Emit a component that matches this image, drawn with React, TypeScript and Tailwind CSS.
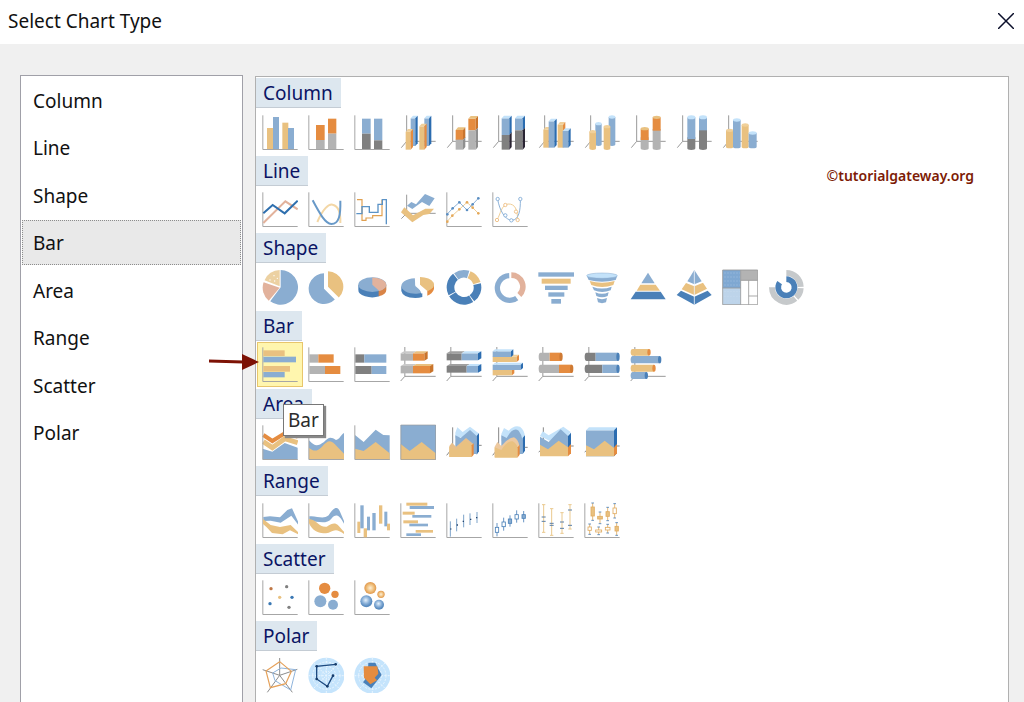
import { useState } from "react";
import type { ReactNode } from "react";
import { clsx } from "clsx";

const BLUE = "#8aadd1";
const DEEP = "#4a80b8";
const SKY = "#c3e2fa";
const TAN = "#e9c180";
const ORANGE = "#e58c40";
const SALMON = "#e2b29c";
const GRAY = "#b3b3b3";
const DARK = "#808080";

type Shades = [front: string, top: string, side: string];

const blue3: Shades = [BLUE, SKY, "#2b6cb0"];
const tan3: Shades = [TAN, "#f0d09a", ORANGE];
const orange3: Shades = [ORANGE, TAN, "#c9742c"];
const gray3: Shades = [GRAY, "#c9c9c9", "#8f8f8f"];
const dark3: Shades = [DARK, "#a0a0a0", "#2a2433"];

/* ---- drawing helpers, all on a 108 x 108 grid ---- */

const Axis = () => (
  <path d="M2.5 4V106.5H107" fill="none" stroke="#a6a6a6" strokeWidth="3" />
);

const Axis3 = () => (
  <path d="M20 4V82H107M20 82L4 101" fill="none" stroke="#999" strokeWidth="3" />
);

const BarAxis3 = () => (
  <path d="M14.5 3V91H107M14.5 91L2 105" fill="none" stroke="#999" strokeWidth="3" />
);

function R({ x, y, x2, y2, c }: { x: number; y: number; x2: number; y2: number; c: string }) {
  return <rect x={x} y={y} width={x2 - x} height={y2 - y} fill={c} />;
}

function P({ p, c }: { p: string; c: string }) {
  return <polygon points={p} fill={c} />;
}

function L({ p, c, w = 3 }: { p: string; c: string; w?: number }) {
  return <polyline points={p} fill="none" stroke={c} strokeWidth={w} />;
}

type BoxProps = {
  x: number;
  y: number;
  x2: number;
  y2: number;
  s: Shades;
  dx?: number;
  dy?: number;
  top?: boolean;
  side?: boolean;
};

function Box({ x, y, x2, y2, s, dx = 7, dy = 8, top = true, side = true }: BoxProps) {
  return (
    <g>
      <R x={x} y={y} x2={x2} y2={y2} c={s[0]} />
      {top && <P p={`${x},${y} ${x + dx},${y - dy} ${x2 + dx},${y - dy} ${x2},${y}`} c={s[1]} />}
      {side && (
        <P p={`${x2},${y} ${x2 + dx},${y - dy} ${x2 + dx},${y2 - dy} ${x2},${y2}`} c={s[2]} />
      )}
    </g>
  );
}

function Cyl({ x, y, x2, y2, s, top = true }: Omit<BoxProps, "dx" | "dy" | "side">) {
  const r = (x2 - x) / 2;
  return (
    <g>
      <path d={`M${x} ${y}V${y2 - 5}A${r} 5 0 0 0 ${x2} ${y2 - 5}V${y}Z`} fill={s[0]} />
      {top && <ellipse cx={x + r} cy={y} rx={r} ry="5" fill={s[1]} />}
    </g>
  );
}

// Lying cylinder: the first part runs to `mid`, the second to x2
function Tube(p: { x: number; y: number; mid?: number; x2: number; y2: number; a: string; b: string; cap: string }) {
  const r = (p.y2 - p.y) / 2;
  const mid = p.mid ?? p.x2 - 6;
  return (
    <g>
      <path d={`M${p.x + 6} ${p.y}H${mid}V${p.y2}H${p.x + 6}A6 ${r} 0 0 1 ${p.x + 6} ${p.y}Z`} fill={p.a} />
      <R x={mid} y={p.y} x2={p.x2 - 5} y2={p.y2} c={p.b} />
      <ellipse cx={p.x2 - 5} cy={p.y + r} rx="5" ry={r} fill={p.cap} />
    </g>
  );
}

type SliceProps = { cx: number; cy: number; r: number; from: number; to: number; hole?: number; flat?: number; c: string };

function Slice({ cx, cy, r, from, to, hole = 0, flat = 1, c }: SliceProps) {
  const at = (deg: number, rad: number) => {
    const a = (deg * Math.PI) / 180;
    return `${(cx + rad * Math.sin(a)).toFixed(1)} ${(cy - rad * flat * Math.cos(a)).toFixed(1)}`;
  };
  const big = to - from > 180 ? 1 : 0;
  const inner = hole
    ? `L${at(to, hole)}A${hole} ${hole * flat} 0 ${big} 0 ${at(from, hole)}Z`
    : `L${cx} ${cy}Z`;
  return <path d={`M${at(from, r)}A${r} ${r * flat} 0 ${big} 1 ${at(to, r)}${inner}`} fill={c} />;
}

function Dots({ at, c, r = 4, hollow }: { at: number[][]; c: string; r?: number; hollow?: boolean }) {
  return (
    <g fill={hollow ? "#fff" : c} stroke={c} strokeWidth={hollow ? 2.5 : 0}>
      {at.map(([x, y]) => (
        <circle key={`${x}-${y}`} cx={x} cy={y} r={r} />
      ))}
    </g>
  );
}

// Box and whisker
function Candle(p: { x: number; y: number; y2: number; b: number; b2: number; c: string; fill?: string; tick?: boolean; w?: number }) {
  const w = p.w ?? 5;
  return (
    <g stroke={p.c} strokeWidth="2.5" fill={p.fill ?? "#fff"}>
      <path d={`M${p.x} ${p.y}V${p.y2}`} />
      {p.tick && <path d={`M${p.x - 4} ${p.y}h8M${p.x - 4} ${p.y2}h8`} stroke={DEEP} />}
      <rect x={p.x - w} y={p.b} width={w * 2} height={p.b2 - p.b} />
    </g>
  );
}

function PolarGrid() {
  return (
    <g>
      <circle cx="55" cy="56" r="54" fill="#c5e4fc" />
      <g fill="none" stroke="#e9f5fe" strokeWidth="3" strokeDasharray="6 4">
        <circle cx="55" cy="56" r="41" />
        <circle cx="55" cy="56" r="28" />
        <circle cx="55" cy="56" r="14" />
        <path d="M55 2V110M1 56H109M17 18L93 94M93 18L17 94" />
      </g>
    </g>
  );
}

function Ball({ x, y, r, id }: { x: number; y: number; r: number; id: string }) {
  return <circle cx={x} cy={y} r={r} fill={`url(#${id})`} />;
}

/* ---- the chart types ---- */

type ChartType = { name: string; art: ReactNode };
type Group = { title: string; charts: ChartType[] };

const groups: Group[] = [
  {
    title: "Column",
    charts: [
      {
        name: "Column",
        art: (
          <>
            <Axis />
            <R x={15} y={42} x2={33} y2={105} c={TAN} />
            <R x={33} y={9} x2={51} y2={105} c={BLUE} />
            <R x={61} y={26} x2={79} y2={105} c={TAN} />
            <R x={78} y={42} x2={96} y2={105} c={BLUE} />
          </>
        ),
      },
      {
        name: "Stacked Column",
        art: (
          <>
            <Axis />
            <R x={24} y={33} x2={50} y2={78} c={ORANGE} />
            <R x={24} y={78} x2={50} y2={105} c={GRAY} />
            <R x={60} y={14} x2={85} y2={59} c={ORANGE} />
            <R x={60} y={59} x2={85} y2={105} c={GRAY} />
          </>
        ),
      },
      {
        name: "100% Stacked Column",
        art: (
          <>
            <Axis />
            <R x={24} y={14} x2={50} y2={59} c={BLUE} />
            <R x={24} y={59} x2={50} y2={105} c={DARK} />
            <R x={60} y={14} x2={85} y2={79} c={BLUE} />
            <R x={60} y={79} x2={85} y2={105} c={DARK} />
          </>
        ),
      },
      {
        name: "3-D Column",
        art: (
          <>
            <Axis3 />
            <Box x={32} y={13} x2={46} y2={96} s={blue3} />
            <Box x={73} y={13} x2={87} y2={96} s={blue3} />
            <Box x={17} y={53} x2={32} y2={107} s={tan3} />
            <Box x={58} y={37} x2={73} y2={107} s={tan3} />
          </>
        ),
      },
      {
        name: "3-D Stacked Column",
        art: (
          <>
            <Axis3 />
            <Box x={29} y={48} x2={51} y2={78} s={orange3} />
            <Box x={29} y={77} x2={51} y2={107} s={gray3} top={false} />
            <Box x={67} y={14} x2={89} y2={49} s={orange3} />
            <Box x={67} y={49} x2={89} y2={107} s={gray3} top={false} />
          </>
        ),
      },
      {
        name: "3-D 100% Stacked Column",
        art: (
          <>
            <Axis3 />
            <Box x={29} y={13} x2={52} y2={63} s={blue3} />
            <Box x={29} y={63} x2={52} y2={107} s={dark3} top={false} />
            <Box x={69} y={13} x2={92} y2={49} s={blue3} />
            <Box x={69} y={49} x2={92} y2={107} s={dark3} top={false} />
          </>
        ),
      },
      {
        name: "3-D Clustered Column",
        art: (
          <>
            <Axis3 />
            <Box x={16} y={47} x2={32} y2={101} s={tan3} />
            <Box x={32} y={22} x2={49} y2={101} s={blue3} />
            <Box x={59} y={32} x2={75} y2={101} s={tan3} />
            <Box x={74} y={51} x2={91} y2={101} s={blue3} />
          </>
        ),
      },
      {
        name: "3-D Cylinder",
        art: (
          <>
            <Axis3 />
            <Cyl x={34} y={29} x2={53} y2={96} s={blue3} />
            <Cyl x={74} y={9} x2={94} y2={96} s={blue3} />
            <Cyl x={16} y={53} x2={36} y2={108} s={tan3} />
            <Cyl x={59} y={38} x2={79} y2={108} s={tan3} />
          </>
        ),
      },
      {
        name: "Stacked Cylinder",
        art: (
          <>
            <Axis3 />
            <Cyl x={32} y={70} x2={56} y2={108} s={gray3} top={false} />
            <R x={32} y={44} x2={56} y2={78} c={ORANGE} />
            <ellipse cx="44" cy="44" rx="12" ry="5" fill={TAN} />
            <Cyl x={68} y={45} x2={92} y2={108} s={gray3} top={false} />
            <R x={68} y={10} x2={92} y2={50} c={ORANGE} />
            <ellipse cx="80" cy="10" rx="12" ry="5" fill={TAN} />
          </>
        ),
      },
      {
        name: "100% Stacked Cylinder",
        art: (
          <>
            <Axis3 />
            <Cyl x={34} y={70} x2={58} y2={108} s={dark3} top={false} />
            <R x={34} y={10} x2={58} y2={75} c={BLUE} />
            <ellipse cx="46" cy="10" rx="12" ry="6" fill={SKY} />
            <Cyl x={69} y={45} x2={93} y2={108} s={dark3} top={false} />
            <R x={69} y={10} x2={93} y2={49} c={BLUE} />
            <ellipse cx="81" cy="10" rx="12" ry="6" fill={SKY} />
          </>
        ),
      },
      {
        name: "Clustered Cylinder",
        art: (
          <>
            <Axis3 />
            <Cyl x={12} y={49} x2={34} y2={103} s={tan3} />
            <Cyl x={33} y={18} x2={56} y2={103} s={blue3} />
            <Cyl x={59} y={33} x2={80} y2={103} s={tan3} />
            <Cyl x={80} y={57} x2={104} y2={103} s={blue3} />
          </>
        ),
      },
    ],
  },
  {
    title: "Line",
    charts: [
      {
        name: "Line",
        art: (
          <>
            <Axis />
            <L p="4,96 70,31 107,55" c={SALMON} w={6} />
            <L p="4,67 32,42 68,67 107,29" c="#2f6fae" w={6} />
          </>
        ),
      },
      {
        name: "Smooth Line",
        art: (
          <>
            <Axis />
            <path d="M28 93C44 54 62 38 74 41C92 45 98 70 97 96" fill="none" stroke="#f3d7a6" strokeWidth="6" />
            <path d="M14 28C34 66 52 98 70 99C94 99 98 70 97 29" fill="none" stroke="#6899c8" strokeWidth="6" />
          </>
        ),
      },
      {
        name: "Stepped Line",
        art: (
          <>
            <Axis />
            <path d="M9 26H24V88H36V81H56V74H84V26" fill="none" stroke="#e0a050" strokeWidth="3.5" />
            <path d="M7 68H24V47H46V64H72V40H85V26H97V100" fill="none" stroke="#5b93c6" strokeWidth="4" />
          </>
        ),
      },
      {
        name: "3-D Line",
        art: (
          <>
            <path d="M20 11V67H107M20 67L4 83" fill="none" stroke="#999" strokeWidth="3" />
            <P p="21,44 34,33 48,40 75,9 104,22 88,45 66,33 37,54" c={BLUE} />
            <P p="3,64 13,49 39,73 76,53 102,53 88,69 70,72 37,94" c={TAN} />
          </>
        ),
      },
      {
        name: "Line with Markers",
        art: (
          <>
            <Axis />
            <L p="3,92 19,74 40,55 63,34 80,50 97,67" c="#f0cf98" />
            <L p="3,70 20,52 40,34 63,57 80,40 97,22" c="#8db2d8" />
            <Dots at={[[4, 92], [19, 74], [40, 55], [63, 34], [80, 50], [97, 67]]} c="#e5a95a" />
            <Dots at={[[4, 70], [20, 52], [40, 34], [63, 57], [80, 40], [97, 22]]} c="#5b8ec2" />
          </>
        ),
      },
      {
        name: "Smooth Line with Markers",
        art: (
          <>
            <Axis />
            <path d="M15 87C26 68 28 42 48 39C70 38 76 56 77 87" fill="none" stroke="#f0cf98" strokeWidth="3" />
            <path d="M17 24C22 58 40 88 60 88C80 86 86 60 85 24" fill="none" stroke="#8db2d8" strokeWidth="3" />
            <Dots at={[[15, 87], [40, 42], [72, 62], [77, 87]]} c="#ecb878" r={5} hollow />
            <Dots at={[[17, 24], [40, 73], [58, 88], [85, 24]]} c="#7ba7d4" r={5} hollow />
          </>
        ),
      },
    ],
  },
  {
    title: "Shape",
    charts: [
      {
        name: "Pie",
        art: (
          <>
            <Slice cx={56} cy={55} r={52} from={0} to={217} c={BLUE} />
            <Slice cx={53} cy={56} r={51} from={220} to={289} c={SALMON} />
            <Slice cx={53} cy={52} r={49} from={292} to={360} c="#ecd1a2" />
            <g fill="#fff">
              <circle cx="24" cy="33" r="2" />
              <circle cx="36" cy="20" r="2" />
              <circle cx="38" cy="36" r="2" />
              <circle cx="46" cy="28" r="2" />
            </g>
          </>
        ),
      },
      {
        name: "Exploded Pie",
        art: (
          <>
            <Slice cx={48} cy={59} r={46} from={135} to={360} c={BLUE} />
            <Slice cx={60} cy={53} r={46} from={0} to={135} c={TAN} />
          </>
        ),
      },
      {
        name: "3-D Pie",
        art: (
          <>
            <path d="M13 47V62A42 22 0 0 0 76 82V60Z" fill={DEEP} />
            <path d="M97 47V62A42 22 0 0 1 74 82V60Z" fill="#d98447" />
            <ellipse cx="55" cy="47" rx="42" ry="22" fill={BLUE} />
            <Slice cx={55} cy={47} r={42} flat={0.52} from={0} to={150} c={SALMON} />
          </>
        ),
      },
      {
        name: "3-D Exploded Pie",
        art: (
          <>
            <path d="M4 52V66Q8 86 46 87Q58 87 67 84V71Z" fill={DEEP} />
            <Slice cx={46} cy={51} r={42} flat={0.55} from={148} to={358} c={BLUE} />
            <path d="M102 46V60Q98 74 82 80V65Z" fill={ORANGE} />
            <Slice cx={60} cy={47} r={42} flat={0.55} from={0} to={147} c={TAN} />
            <path d="M50 27V46L57 49L68 73" fill="none" stroke="#fff" strokeWidth="7" />
          </>
        ),
      },
      {
        name: "Doughnut",
        art: (
          <>
            <Slice cx={54} cy={55} r={52} hole={29} from={325} to={378} c={BLUE} />
            <Slice cx={54} cy={55} r={52} hole={29} from={22} to={72} c={TAN} />
            <Slice cx={54} cy={55} r={52} hole={29} from={76} to={144} c={DEEP} />
            <Slice cx={54} cy={55} r={52} hole={29} from={148} to={239} c={DEEP} />
            <Slice cx={54} cy={55} r={52} hole={29} from={243} to={321} c={DEEP} />
          </>
        ),
      },
      {
        name: "Exploded Doughnut",
        art: (
          <>
            <Slice cx={53} cy={57} r={45} hole={29} from={145} to={358} c={BLUE} />
            <Slice cx={58} cy={53} r={43} hole={26} from={0} to={136} c={SALMON} />
          </>
        ),
      },
      {
        name: "Funnel",
        art: (
          <>
            <R x={1} y={10} x2={108} y2={23} c={BLUE} />
            <R x={11} y={29} x2={98} y2={44} c={TAN} />
            <R x={21} y={50} x2={89} y2={63} c={BLUE} />
            <R x={31} y={70} x2={79} y2={83} c={BLUE} />
            <R x={40} y={90} x2={69} y2={104} c={BLUE} />
          </>
        ),
      },
      {
        name: "3-D Funnel",
        art: (
          <>
            <path d="M8 20L14 33Q54 44 95 33L100 20Z" fill={BLUE} />
            <path d="M17 36Q54 47 92 36L88 48Q54 60 22 48Z" fill={TAN} />
            <path d="M25 53Q54 64 83 53L80 64Q54 74 30 64Z" fill={BLUE} />
            <path d="M34 70Q54 79 74 70L71 81Q54 89 37 81Z" fill={BLUE} />
            <path d="M39 87Q54 94 69 87L66 100Q54 105 42 100Z" fill={BLUE} />
            <ellipse cx="54" cy="20" rx="46" ry="8" fill={SKY} stroke={BLUE} strokeWidth="1.5" />
          </>
        ),
      },
      {
        name: "Pyramid",
        art: (
          <>
            <P p="54,11 34,43 74,43" c={BLUE} />
            <P p="31,47 77,47 90,65 20,65" c={TAN} />
            <P p="17,68 92,68 107,91 2,91" c={DEEP} />
          </>
        ),
      },
      {
        name: "3-D Pyramid",
        art: (
          <>
            <P p="55,3 34,37 55,46 77,37" c={BLUE} />
            <P p="30,42 55,52 81,41 93,59 55,78 17,61" c={TAN} />
            <P p="15,65 55,83 95,65 107,78 55,107 2,78" c={DEEP} />
            <path d="M55 4V107" stroke="#eef4fa" strokeWidth="2.5" />
          </>
        ),
      },
      {
        name: "Tree Map",
        art: (
          <>
            <R x={2} y={2} x2={108} y2={108} c="#fff" />
            <R x={2} y={3} x2={56} y2={57} c="#7fa8d2" />
            <R x={56} y={3} x2={107} y2={34} c={GRAY} />
            <R x={2} y={57} x2={56} y2={107} c="#bdd4ea" />
            <path
              d="M2 3H107V107H2ZM56 3V107M2 57H56M56 34H107M80 34V107M80 81H107"
              fill="none"
              stroke="#999"
              strokeWidth="2.5"
            />
            <path d="M8 12H54M8 24H54M8 36H54M8 48H54M8 68H54M8 82H54M8 96H54" stroke="#d6e6f5" strokeWidth="2" strokeDasharray="2 7" />
          </>
        ),
      },
      {
        name: "Sunburst",
        art: (
          <>
            <Slice cx={55} cy={55} r={52} hole={34} from={0} to={88} c="#c6c9cb" />
            <Slice cx={55} cy={55} r={52} hole={34} from={93} to={136} c="#c6c9cb" />
            <Slice cx={55} cy={55} r={52} hole={34} from={141} to={270} c="#c6c9cb" />
            <Slice cx={55} cy={55} r={33} hole={16} from={0} to={305} c={DEEP} />
          </>
        ),
      },
    ],
  },
  {
    title: "Bar",
    charts: [
      {
        name: "Bar",
        art: (
          <>
            <Axis />
            <R x={4} y={13} x2={68} y2={30} c={TAN} />
            <R x={4} y={32} x2={102} y2={49} c={BLUE} />
            <R x={4} y={60} x2={84} y2={77} c={TAN} />
            <R x={4} y={78} x2={68} y2={94} c={BLUE} />
          </>
        ),
      },
      {
        name: "Stacked Bar",
        art: (
          <>
            <Axis />
            <R x={4} y={25} x2={31} y2={50} c={GRAY} />
            <R x={31} y={25} x2={77} y2={50} c={ORANGE} />
            <R x={4} y={60} x2={51} y2={84} c={GRAY} />
            <R x={51} y={60} x2={97} y2={84} c={ORANGE} />
          </>
        ),
      },
      {
        name: "100% Stacked Bar",
        art: (
          <>
            <Axis />
            <R x={4} y={25} x2={31} y2={50} c={DARK} />
            <R x={31} y={25} x2={97} y2={50} c={BLUE} />
            <R x={4} y={60} x2={53} y2={84} c={DARK} />
            <R x={53} y={60} x2={97} y2={84} c={BLUE} />
          </>
        ),
      },
      {
        name: "3-D Stacked Bar",
        art: (
          <>
            <BarAxis3 />
            <Box x={2} y={22} x2={39} y2={44} s={gray3} dx={10} dy={6} side={false} />
            <Box x={39} y={22} x2={73} y2={44} s={orange3} dx={10} dy={6} />
            <Box x={2} y={60} x2={39} y2={82} s={gray3} dx={10} dy={6} side={false} />
            <Box x={39} y={60} x2={90} y2={82} s={orange3} dx={10} dy={6} />
          </>
        ),
      },
      {
        name: "3-D 100% Stacked Bar",
        art: (
          <>
            <BarAxis3 />
            <Box x={2} y={22} x2={47} y2={43} s={dark3} dx={10} dy={6} side={false} />
            <Box x={47} y={22} x2={96} y2={43} s={blue3} dx={10} dy={6} />
            <Box x={2} y={60} x2={62} y2={80} s={dark3} dx={10} dy={6} side={false} />
            <Box x={62} y={60} x2={96} y2={80} s={blue3} dx={10} dy={6} />
          </>
        ),
      },
      {
        name: "3-D Clustered Bar",
        art: (
          <>
            <BarAxis3 />
            <Box x={2} y={32} x2={74} y2={48} s={tan3} dx={7} dy={6} />
            <Box x={2} y={16} x2={57} y2={33} s={blue3} dx={7} dy={6} />
            <Box x={2} y={72} x2={60} y2={88} s={tan3} dx={7} dy={6} />
            <Box x={2} y={56} x2={86} y2={72} s={blue3} dx={7} dy={6} />
          </>
        ),
      },
      {
        name: "Stacked Horizontal Cylinder",
        art: (
          <>
            <BarAxis3 />
            <Tube x={2} y={20} mid={35} x2={74} y2={45} a={GRAY} b={ORANGE} cap="#cf7a33" />
            <Tube x={2} y={56} mid={63} x2={106} y2={81} a={GRAY} b={ORANGE} cap="#cf7a33" />
          </>
        ),
      },
      {
        name: "100% Stacked Horizontal Cylinder",
        art: (
          <>
            <BarAxis3 />
            <Tube x={2} y={20} mid={35} x2={107} y2={45} a={DARK} b={BLUE} cap={DEEP} />
            <Tube x={2} y={56} mid={55} x2={107} y2={81} a={DARK} b={BLUE} cap={DEEP} />
          </>
        ),
      },
      {
        name: "Clustered Horizontal Cylinder",
        art: (
          <>
            <BarAxis3 />
            <Tube x={2} y={9} x2={62} y2={29} a={TAN} b={TAN} cap={ORANGE} />
            <Tube x={2} y={30} x2={94} y2={52} a={BLUE} b={BLUE} cap={DEEP} />
            <Tube x={2} y={56} x2={77} y2={77} a={TAN} b={TAN} cap={ORANGE} />
            <Tube x={2} y={78} x2={54} y2={99} a={BLUE} b={BLUE} cap={DEEP} />
          </>
        ),
      },
    ],
  },
  {
    title: "Area",
    charts: [
      {
        name: "Stacked Area",
        art: (
          <>
            <L p="4,33 31,51 68,28 107,38" c={ORANGE} w={12} />
            <L p="4,53 31,71 68,44 107,56" c={TAN} w={15} />
            <P p="2,74 31,83 68,57 107,71 107,107 2,107" c={BLUE} />
            <Axis />
          </>
        ),
      },
      {
        name: "Smooth Area",
        art: (
          <>
            <path d="M3 49C22 70 30 66 48 54C60 40 68 36 84 48C96 46 98 32 108 27V107H3Z" fill={BLUE} />
            <path d="M3 72C18 82 26 84 42 68C58 50 66 46 80 60L108 89V107H3Z" fill={TAN} />
            <Axis />
          </>
        ),
      },
      {
        name: "Area",
        art: (
          <>
            <P p="3,33 29,54 65,17 88,33 107,34 107,107 3,107" c={BLUE} />
            <P p="3,74 29,81 65,54 107,88 107,107 3,107" c={TAN} />
            <Axis />
          </>
        ),
      },
      {
        name: "100% Stacked Area",
        art: (
          <>
            <R x={2} y={3} x2={108} y2={107} c={BLUE} />
            <P p="2,60 29,81 65,54 107,88 107,107 2,107" c={TAN} />
            <path d="M2.5 3H107V106.5H2.5Z" fill="none" stroke="#9a9a9a" strokeWidth="2" />
          </>
        ),
      },
      {
        name: "3-D Area",
        art: (
          <>
            <P p="28,26 34,10 50,24 72,8 98,28 93,36 28,42" c={SKY} />
            <P p="28,34 44,42 72,18 92,36 92,90 28,90" c={BLUE} />
            <P p="92,36 99,27 99,82 92,92" c="#2b6cb0" />
            <path d="M20 10V84M2 94L18 74M98 64H107" fill="none" stroke="#888" strokeWidth="3" />
            <P p="10,66 18,56 30,68 60,42 82,60 77,99 10,99" c="#e8bf8a" />
            <P p="10,68 30,78 58,48 77,64 77,99 10,99" c={TAN} />
            <P p="77,64 83,58 83,92 77,99" c={ORANGE} />
          </>
        ),
      },
      {
        name: "3-D Smooth Area",
        art: (
          <>
            <path d="M28 30L36 12L50 20Q66 2 84 8Q98 18 99 40L92 50H28Z" fill={SKY} />
            <path d="M28 34L44 42Q62 8 80 20Q90 32 92 50V90H28Z" fill={BLUE} />
            <path d="M92 42L99 34V80L92 90Z" fill="#2b6cb0" />
            <path d="M20 10V84M2 94L18 74M98 70H107" fill="none" stroke="#888" strokeWidth="3" />
            <path d="M8 68L16 54L28 66Q46 42 66 40Q80 48 82 66L78 99H8Z" fill="#edc9a0" />
            <path d="M8 70L28 78Q46 50 62 52Q74 58 77 72V101H8Z" fill={TAN} />
            <path d="M77 70L83 62V92L77 100Z" fill={ORANGE} />
          </>
        ),
      },
      {
        name: "3-D Stacked Area",
        art: (
          <>
            <path d="M16 10V84M2 84L12 76M98 66H107" fill="none" stroke="#888" strokeWidth="3" />
            <P p="6,36 14,22 32,34 76,8 98,24 90,36 34,50" c={SKY} />
            <P p="6,38 32,54 68,16 90,36 90,90 6,90" c={BLUE} />
            <P p="90,36 99,26 99,62 90,74" c="#2b6cb0" />
            <P p="6,62 30,76 62,50 90,70 90,97 6,97" c={TAN} />
            <P p="90,70 99,60 99,88 90,97" c={ORANGE} />
          </>
        ),
      },
      {
        name: "3-D 100% Stacked Area",
        art: (
          <>
            <path d="M2 84L12 76M98 66H107" fill="none" stroke="#888" strokeWidth="3" />
            <Box x={6} y={19} x2={90} y2={97} s={blue3} dx={9} dy={9} />
            <P p="6,64 30,76 62,50 90,72 90,97 6,97" c={TAN} />
            <P p="90,70 99,60 99,88 90,97" c={ORANGE} />
          </>
        ),
      },
    ],
  },
  {
    title: "Range",
    charts: [
      {
        name: "Range",
        art: (
          <>
            <Axis />
            <P p="4,45 24,43 54,46 76,24 90,19 110,63 110,70 88,41 56,62 26,56 4,57" c={BLUE} />
            <P p="3,51 26,69 54,75 86,69 110,92 110,98 84,85 62,97 30,93 14,76 3,66" c={TAN} />
          </>
        ),
      },
      {
        name: "Smooth Range",
        art: (
          <>
            <Axis />
            <path d="M4 43C26 40 44 54 62 40C80 12 90 12 98 34L110 62V69C94 38 84 34 70 50C56 68 30 58 4 57Z" fill={BLUE} />
            <path d="M3 51C24 52 36 78 56 74C82 58 84 60 110 92V98C86 78 80 84 62 92C36 98 16 90 3 64Z" fill={TAN} />
          </>
        ),
      },
      {
        name: "Range Column",
        art: (
          <>
            <Axis />
            <R x={10} y={59} x2={19} y2={93} c={TAN} />
            <R x={19} y={10} x2={29} y2={79} c={BLUE} />
            <R x={29} y={79} x2={39} y2={106} c={TAN} />
            <R x={39} y={44} x2={48} y2={85} c={BLUE} />
            <R x={55} y={33} x2={65} y2={85} c={BLUE} />
            <R x={75} y={10} x2={85} y2={65} c={TAN} />
            <R x={91} y={29} x2={100} y2={73} c={BLUE} />
            <R x={99} y={65} x2={108} y2={85} c={TAN} />
          </>
        ),
      },
      {
        name: "Range Bar",
        art: (
          <>
            <Axis />
            <R x={19} y={2} x2={82} y2={11} c={TAN} />
            <R x={29} y={12} x2={102} y2={21} c={BLUE} />
            <R x={8} y={29} x2={44} y2={38} c={TAN} />
            <R x={37} y={39} x2={94} y2={47} c={BLUE} />
            <R x={10} y={55} x2={54} y2={64} c={TAN} />
            <R x={28} y={65} x2={84} y2={73} c={BLUE} />
            <R x={47} y={84} x2={99} y2={92} c={TAN} />
            <R x={19} y={94} x2={63} y2={102} c={BLUE} />
          </>
        ),
      },
      {
        name: "Stock",
        art: (
          <>
            <Axis />
            <path d="M13 58V104M32 50V88M53 38V76M72 34V69M93 30V63" stroke="#7da3c9" strokeWidth="3" />
            <path d="M13 81h3M32 69h4M50 58h4M72 52h4M90 47h4" stroke="#26466f" strokeWidth="4" />
          </>
        ),
      },
      {
        name: "Candlestick",
        art: (
          <>
            <Axis />
            <Candle x={15} y={63} y2={103} b={76} b2={91} c={DEEP} />
            <Candle x={35} y={47} y2={86} b={60} b2={74} c={DEEP} />
            <Candle x={54} y={40} y2={74} b={51} b2={64} c={DEEP} fill={BLUE} />
            <Candle x={74} y={25} y2={62} b={38} b2={51} c={DEEP} />
            <Candle x={95} y={27} y2={61} b={38} b2={49} c={DEEP} fill={BLUE} />
          </>
        ),
      },
      {
        name: "Error Bar",
        art: (
          <>
            <Axis />
            <path
              d="M17 8V91M12 8h10M12 91h10M41 20V100M36 20h10M36 100h10M72 32V94M67 32h10M67 94h10M96 8V81M91 8h10M91 81h10"
              stroke="#eac98f"
              strokeWidth="3"
              fill="none"
            />
            <path d="M11 45h12M11 58h12M35 64h12M35 70h12M66 60h12M66 79h12M90 24h12M90 70h12" stroke="#5a7fa6" strokeWidth="3" />
          </>
        ),
      },
      {
        name: "Box Plot",
        art: (
          <>
            <Axis />
            <Candle x={26} y={3} y2={55} b={15} b2={42} c="#e0ac62" fill={TAN} tick />
            <Candle x={48} y={30} y2={65} b={43} b2={51} c="#e0ac62" fill={TAN} tick w={7} />
            <Candle x={71} y={16} y2={56} b={29} b2={43} c="#e0ac62" fill={TAN} tick />
            <Candle x={92} y={5} y2={48} b={18} b2={35} c="#e0ac62" tick />
            <Candle x={17} y={66} y2={97} b={75} b2={85} c="#e0ac62" tick />
            <Candle x={44} y={75} y2={98} b={84} b2={90} c="#e0ac62" tick w={9} />
            <Candle x={71} y={67} y2={93} b={76} b2={84} c="#e0ac62" tick w={7} />
            <Candle x={98} y={62} y2={100} b={73} b2={87} c="#e0ac62" fill={TAN} tick />
          </>
        ),
      },
    ],
  },
  {
    title: "Scatter",
    charts: [
      {
        name: "Scatter",
        art: (
          <>
            <Axis />
            <Dots at={[[27, 29]]} c="#bf7746" r={5} />
            <Dots at={[[74, 23], [81, 85]]} c={DARK} r={5} />
            <Dots at={[[53, 55]]} c={TAN} r={5} />
            <Dots at={[[90, 55], [24, 74]]} c="#3a78b4" r={5} />
          </>
        ),
      },
      {
        name: "Bubble",
        art: (
          <>
            <Axis />
            <Dots at={[[50, 28]]} c={ORANGE} r={17} />
            <Dots at={[[81, 46]]} c={ORANGE} r={11} />
            <Dots at={[[37, 67]]} c={BLUE} r={18} />
            <Dots at={[[75, 77]]} c={BLUE} r={15} />
          </>
        ),
      },
      {
        name: "3-D Bubble",
        art: (
          <>
            <defs>
              <radialGradient id="ball-orange">
                <stop offset="0" stopColor="#fdf0d8" />
                <stop offset="0.6" stopColor="#efbf7c" />
                <stop offset="1" stopColor="#e0964a" />
              </radialGradient>
              <radialGradient id="ball-blue" cx="0.45" cy="0.4">
                <stop offset="0" stopColor="#e6f2fc" />
                <stop offset="0.6" stopColor="#8ab0d8" />
                <stop offset="1" stopColor="#5a8cc0" />
              </radialGradient>
            </defs>
            <Axis />
            <Ball x={49} y={27} r={18} id="ball-orange" />
            <Ball x={81} y={46} r={11} id="ball-orange" />
            <Ball x={37} y={67} r={18} id="ball-blue" />
            <Ball x={75} y={77} r={15} id="ball-blue" />
          </>
        ),
      },
    ],
  },
  {
    title: "Polar",
    charts: [
      {
        name: "Radar",
        art: (
          <>
            <path d="M53 3V55L2 38M53 55L16 106M53 55L91 106M53 55L106 37" fill="none" stroke="#8d8d8d" strokeWidth="3" />
            <polygon points="57,33 101,38 86,99 39,71 32,48" fill="none" stroke="#8fb4dc" strokeWidth="3" />
            <polygon points="53,14 88,43 71,80 25,92 12,42" fill="none" stroke="#e5a15a" strokeWidth="3.5" />
          </>
        ),
      },
      {
        name: "Polar",
        art: (
          <>
            <PolarGrid />
            <L p="83,22 26,28 26,66 58,88 75,56" c="#1d4a80" w={4} />
            <Dots at={[[83, 22], [26, 28], [26, 66], [58, 88], [75, 56]]} c="#173c6b" r={4} />
          </>
        ),
      },
      {
        name: "3-D Polar",
        art: (
          <>
            <PolarGrid />
            <P p="43,17 64,17 70,30 83,54 52,94 27,76 41,58" c={DEEP} />
            <P p="29,28 70,28 73,50 62,62 69,70 49,82 30,62" c={ORANGE} />
          </>
        ),
      },
    ],
  },
];

function Arrow() {
  return (
    <svg viewBox="0 0 50 18" className="pointer-events-none absolute -left-12 top-[11px] h-[18px] w-[50px]" aria-hidden="true">
      <path d="M0 6.5L34 7.5V10.5L0 9.5Z" fill="#7d1205" />
      <path d="M33 1L50 9L33 17Z" fill="#7d1205" />
    </svg>
  );
}

export default function App() {
  const [category, setCategory] = useState("Bar");
  const [chart, setChart] = useState("Bar/Bar");

  return (
    <div className="flex min-h-screen flex-col bg-[#f0f0f0] font-['Noto_Sans','Open_Sans',sans-serif] text-[19px] leading-7 text-[#111]">
      <header className="flex h-11 items-center justify-between bg-white pr-2.5 pb-0.5 pl-2">
        <h1>Select Chart Type</h1>
        <button type="button" aria-label="Close" className="flex size-4 items-center justify-center">
          <svg viewBox="0 0 16 16" className="size-4" aria-hidden="true">
            <path d="M0 0L16 16M16 0L0 16" stroke="#0b0f2a" strokeWidth="1.5" />
          </svg>
        </button>
      </header>

      <main className="flex flex-1 gap-3 pt-8 pr-[15px] pl-5">
        <nav aria-label="Chart categories" className="-mt-px w-[223px] shrink-0 border border-b-0 border-[#a0a0a8] bg-white p-px">
          <ul className="flex h-[378px] flex-col gap-0.5">
            {groups.map(({ title }) => (
              <li key={title} className="flex flex-1">
                <button
                  type="button"
                  aria-pressed={category === title}
                  onClick={() => setCategory(title)}
                  className={clsx(
                    "w-full border px-2.5 pt-0.5 text-left",
                    category === title ? "border-dotted border-[#8c8c8c] bg-[#e9e9e9]" : "border-transparent"
                  )}
                >
                  {title}
                </button>
              </li>
            ))}
          </ul>
        </nav>

        <div className="relative flex min-w-0 flex-1 flex-col border border-b-0 border-[#b0b0b0] bg-white pt-px pb-[3px]">
          {groups.map(({ title, charts }) => (
            <section key={title} className="flex-1">
              <h2 className="w-fit border-b border-[#c4ccd4] bg-[#dde7ef] pt-0.5 pr-2 pl-[7px] leading-[27px] text-[#0a1464]">
                {title}
              </h2>
              <ul className="flex flex-wrap pt-px pl-px">
                {charts.map(({ name, art }) => {
                  const active = chart === `${title}/${name}`;
                  return (
                    <li key={name} className="relative">
                      <button
                        type="button"
                        aria-label={name}
                        onClick={() => setChart(`${title}/${name}`)}
                        className={clsx(
                          "flex h-[45px] w-[46px] items-center justify-center border",
                          active ? "border-[#e8c66c] bg-[#fff6ae]" : "border-transparent"
                        )}
                      >
                        <svg viewBox="0 0 108 108" className="size-9" aria-hidden="true">
                          {art}
                        </svg>
                      </button>
                      {active && (
                        <>
                          <Arrow />
                          <span
                            role="tooltip"
                            className="absolute top-[62px] left-[26px] z-10 border border-[#777] bg-white px-1 leading-[30px] whitespace-nowrap text-[#2b2b2b] shadow-[2px_2px_1px_#888]"
                          >
                            {name}
                          </span>
                        </>
                      )}
                    </li>
                  );
                })}
              </ul>
            </section>
          ))}
          <p className="absolute top-[89px] right-[34px] text-sm leading-5 font-semibold text-[#7d1b05]">
            ©tutorialgateway.org
          </p>
        </div>
      </main>
    </div>
  );
}
